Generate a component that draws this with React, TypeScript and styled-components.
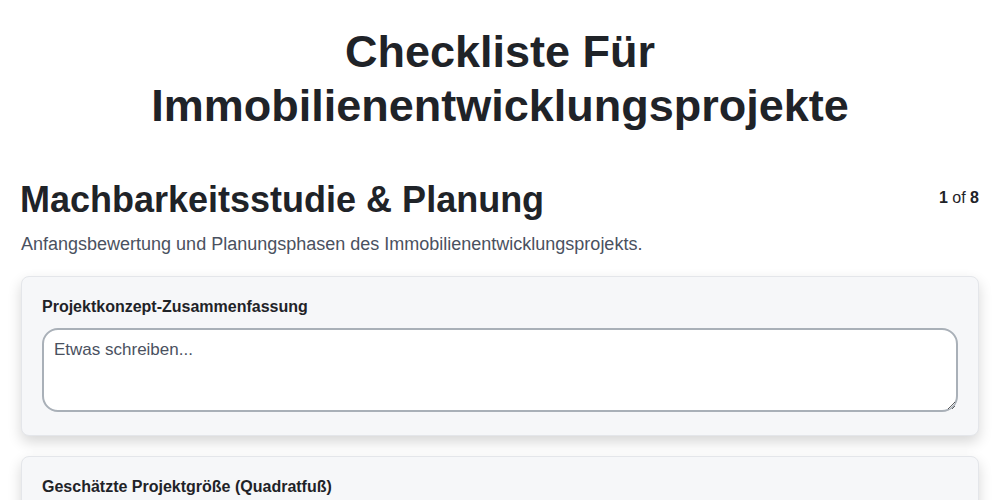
import React from "react";
import styled, { createGlobalStyle } from "styled-components";

const GlobalStyle = createGlobalStyle`
  html, body {
    margin: 0;
    padding: 0;
    background: #ffffff;
    font-family: "Liberation Sans", Arial, sans-serif;
    color: #1f2328;
  }
  * { box-sizing: border-box; }
`;

const Page = styled.div`
  padding: 0 21px;
`;

const Title = styled.h1`
  margin: 0;
  padding-top: 25px;
  text-align: center;
  font-size: 45px;
  line-height: 54px;
  font-weight: 700;
  color: #1f2328;
`;

const SectionHeader = styled.div`
  display: flex;
  justify-content: space-between;
  align-items: flex-start;
  margin-top: 45px;
`;

const SectionTitle = styled.h2`
  margin: 0 0 0 -1px;
  font-size: 36px;
  line-height: 44px;
  font-weight: 700;
`;

const Counter = styled.div`
  font-size: 16px;
  padding-top: 11px;
  color: #1f2328;
  b {
    font-weight: 700;
  }
`;

const SectionText = styled.p`
  margin: 11px 0 0;
  font-size: 18px;
  line-height: 22px;
  color: #4a5160;
`;

const Fields = styled.div`
  display: flex;
  flex-direction: column;
  gap: 20px;
  margin-top: 21px;
`;

const Card = styled.div`
  background: #f6f7f9;
  border: 1px solid #e4e6ea;
  border-radius: 8px;
  padding: 20px 20px 23px;
  box-shadow: 0 6px 14px rgba(0, 0, 0, 0.16);
`;

const Label = styled.label`
  display: block;
  font-size: 16px;
  font-weight: 700;
  line-height: 20px;
  color: #1f2328;
  margin-bottom: 11px;
`;

const TextArea = styled.textarea`
  display: block;
  width: 100%;
  height: 84px;
  border: 2px solid #a9b0b8;
  border-radius: 16px;
  padding: 10px 10px;
  font-family: "Liberation Sans", Arial, sans-serif;
  font-size: 17px;
  color: #1f2328;
  background: #ffffff;
  resize: vertical;
  outline: none;
  &::placeholder {
    color: #4a5160;
  }
`;

const fields = [
  "Projektkonzept-Zusammenfassung",
  "Geschätzte Projektgröße (Quadratfuß)",
];

export default function App() {
  return (
    <>
      <GlobalStyle />
      <Page>
        <Title>
          Checkliste Für
          <br />
          Immobilienentwicklungsprojekte
        </Title>
        <SectionHeader>
          <SectionTitle>Machbarkeitsstudie &amp; Planung</SectionTitle>
          <Counter>
            <b>1</b> of <b>8</b>
          </Counter>
        </SectionHeader>
        <SectionText>
          Anfangsbewertung und Planungsphasen des Immobilienentwicklungsprojekts.
        </SectionText>
        <Fields>
          {fields.map((f) => (
            <Card key={f}>
              <Label>{f}</Label>
              <TextArea placeholder="Etwas schreiben..." />
            </Card>
          ))}
        </Fields>
      </Page>
    </>
  );
}
